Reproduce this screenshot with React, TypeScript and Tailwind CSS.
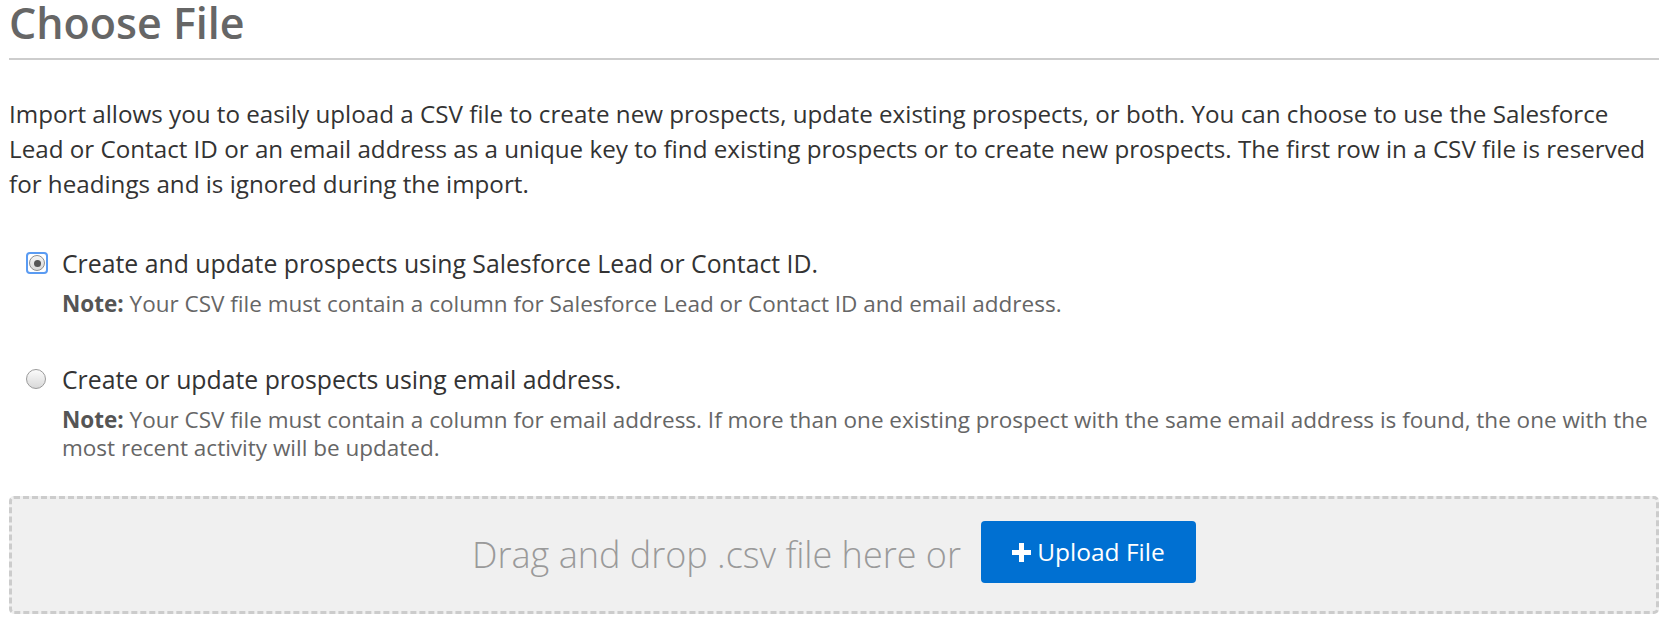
export default function App() {
  return (
    <div
      className="w-[1667px] h-[639px] bg-white overflow-hidden pl-[9px] pr-[8px]"
      style={{ fontFamily: '"Open Sans", "Liberation Sans", sans-serif' }}
    >
      {/* Heading */}
      <h1 className="text-[43px] leading-[48px] -mt-[1px] font-semibold text-[#666666] whitespace-nowrap">Choose File</h1>
      <div className="mt-[11px] h-[2px] bg-[#cdcdcd]" />

      {/* Intro */}
      <p className="mt-[36px] text-[24.2px] leading-[35px] text-[#333333] whitespace-nowrap">
        <span className="block">
          Import allows you to easily upload a CSV file to create new prospects, update existing prospects, or both. You can choose to use the Salesforce
        </span>
        <span className="block">
          Lead or Contact ID or an email address as a unique key to find existing prospects or to create new prospects. The first row in a CSV file is reserved
        </span>
        <span className="block">for headings and is ignored during the import.</span>
      </p>

      {/* Option 1 */}
      <div className="mt-[47px]">
        <label className="flex items-center">
          <span className="ml-[17px] w-[22px] h-[22px] rounded-[4px] border-2 border-[#5a9bf2] flex items-center justify-center">
            <span className="w-[16px] h-[16px] rounded-full border border-[#8f8f8f] bg-gradient-to-b from-[#f4f4f4] to-[#d8d8d8] flex items-center justify-center">
              <span className="w-[7px] h-[7px] rounded-full bg-[#555555]" />
            </span>
          </span>
          <span className="ml-[14px] text-[24.8px] leading-[30px] text-[#333333] whitespace-nowrap">
            Create and update prospects using Salesforce Lead or Contact ID.
          </span>
        </label>
        <p className="mt-[12px] ml-[53px] text-[22.5px] leading-[28px] text-[#666666] whitespace-nowrap">
          <b className="font-bold text-[#555555]">Note:</b> Your CSV file must contain a column for Salesforce Lead
          or Contact ID and email address.
        </p>
      </div>

      {/* Option 2 */}
      <div className="mt-[46px]">
        <label className="flex items-center">
          <span className="ml-[17px] w-[20px] h-[20px] rounded-full border border-[#9a9a9a] bg-gradient-to-b from-[#fbfbfb] to-[#d9d9d9]" />
          <span className="ml-[16px] text-[24.8px] leading-[30px] text-[#333333] whitespace-nowrap">
            Create or update prospects using email address.
          </span>
        </label>
        <p className="mt-[12px] ml-[53px] text-[22.5px] leading-[28px] text-[#666666] whitespace-nowrap">
          <span className="block">
            <b className="font-bold text-[#555555]">Note:</b> Your CSV file must contain a column for email address.
            If more than one existing prospect with the same email address is found, the one with the
          </span>
          <span className="block">most recent activity will be updated.</span>
        </p>
      </div>

      {/* Drop zone */}
      <div className="mt-[34px] h-[118px] rounded-[5px] border-[3px] border-dashed border-[#cccccc] bg-[#f0f0f0] flex items-center justify-center gap-[20px]">
        <span className="text-[36px] font-light text-[#9a9a9a] whitespace-nowrap">Drag and drop .csv file here or</span>
        <button className="w-[215px] h-[62px] rounded-[4px] bg-[#0070d2] text-white flex items-center justify-center gap-[6px] text-[24.5px] -mt-[6px]">
          <svg width="19" height="19" viewBox="0 0 19 19" aria-hidden="true">
            <path d="M7 0h5v7h7v5h-7v7H7v-7H0V7h7z" fill="currentColor" />
          </svg>
          Upload File
        </button>
      </div>
    </div>
  );
}
